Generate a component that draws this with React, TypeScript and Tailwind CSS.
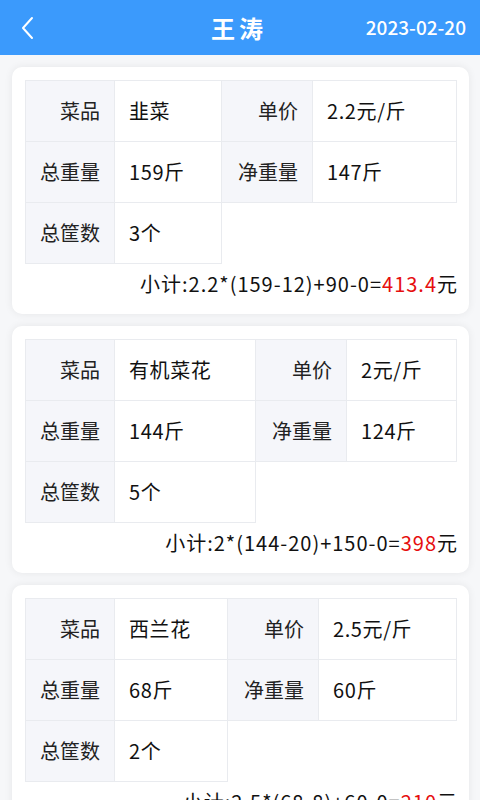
import React from 'react';

interface Record {
  name: string;
  price: string;
  gross: string;
  net: string;
  baskets: string;
  formula: string;
  total: string;
  cols: string;
}

const records: Record[] = [
  {
    name: '韭菜',
    price: '2.2元/斤',
    gross: '159斤',
    net: '147斤',
    baskets: '3个',
    formula: '小计:2.2*(159-12)+90-0=',
    total: '413.4',
    cols: 'grid-cols-[90px_107px_91px_1fr]',
  },
  {
    name: '有机菜花',
    price: '2元/斤',
    gross: '144斤',
    net: '124斤',
    baskets: '5个',
    formula: '小计:2*(144-20)+150-0=',
    total: '398',
    cols: 'grid-cols-[90px_141px_91px_1fr]',
  },
  {
    name: '西兰花',
    price: '2.5元/斤',
    gross: '68斤',
    net: '60斤',
    baskets: '2个',
    formula: '小计:2.5*(68-8)+60-0=',
    total: '210',
    cols: 'grid-cols-[90px_113px_91px_1fr]',
  },
];

const Label = ({ text, first }: { text: string; first?: boolean }) => (
  <div
    className={`h-[61px] flex items-center justify-end pr-[14px] bg-[#f5f6fa] border-r border-b border-[#e9ebef] text-[#222] ${first ? 'border-l' : ''}`}
  >
    {text}
  </div>
);

const Value = ({ text }: { text: string }) => (
  <div className="h-[61px] flex items-center pl-[14px] bg-white border-r border-b border-[#e9ebef] text-[#111] tracking-[0.6px]">
    {text}
  </div>
);

const RecordCard = ({ r }: { r: Record }) => (
  <div className="bg-white rounded-[10px] shadow-[0_0_8px_rgba(0,0,0,0.07)] pl-[13px] pr-[12px] pt-[13px] pb-[16px]">
    <div className={`grid ${r.cols} border-t border-[#e9ebef] text-[20px]`}>
      <Label text="菜品" first />
      <Value text={r.name} />
      <Label text="单价" />
      <Value text={r.price} />
      <Label text="总重量" first />
      <Value text={r.gross} />
      <Label text="净重量" />
      <Value text={r.net} />
      <Label text="总筐数" first />
      <Value text={r.baskets} />
    </div>
    <div className="mt-[6px] text-right text-[20px] leading-[28px] text-[#111] tracking-[1px] -mr-[1px]">
      {r.formula}
      <span className="text-[#e60f0f]">{r.total}</span>元
    </div>
  </div>
);

export default function App() {
  return (
    <div
      className="w-[480px] h-[800px] overflow-hidden bg-[#f6f7f9]"
      style={{ fontFamily: '"Noto Sans CJK SC", "Noto Sans", sans-serif' }}
    >
      <div className="h-[55px] bg-[#3b9afc] flex items-center px-[14px]">
        <svg width="14" height="24" viewBox="0 0 14 24" className="ml-[7px]">
          <polyline
            points="11,2 2,12 11,22"
            fill="none"
            stroke="white"
            strokeWidth="2"
            strokeLinecap="round"
            strokeLinejoin="round"
          />
        </svg>
        <div className="flex-1 text-center text-white text-[24px] font-bold tracking-[4px] ml-[77px]">
          王涛
        </div>
        <div className="text-white text-[19px] font-medium">2023-02-20</div>
      </div>
      <div className="flex flex-col gap-[12px] pl-[12px] pr-[11px] pt-[12px]">
        {records.map((r) => (
          <RecordCard key={r.name} r={r} />
        ))}
      </div>
    </div>
  );
}
